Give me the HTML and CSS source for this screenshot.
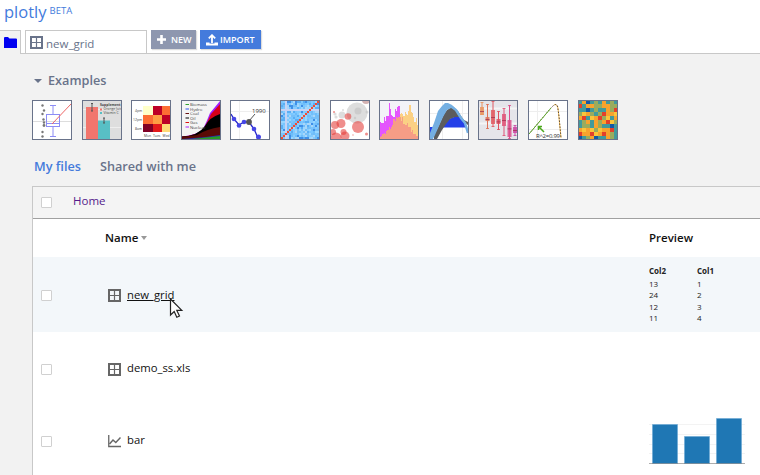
FILE: index.html
```html
<!DOCTYPE html>
<html lang="en">
<head>
<meta charset="utf-8">
<title>plotly</title>
<link rel="stylesheet" href="styles.css">
</head>
<body>
<svg class="defs" width="0" height="0">
  <symbol id="grid" viewBox="0 0 13 13"><rect x="1" y="1" width="11" height="11" fill="none" stroke="currentColor" stroke-width="2"/><path d="M6.5 1V12M1 6.5H12" stroke="currentColor" stroke-width="1.2"/></symbol>
</svg>
<header class="brand"><span class="logo">plotly</span><span class="beta">BETA</span></header>
<nav class="tabs">
  <div class="tab folder"><svg width="13" height="11" viewBox="0 0 13 11"><path d="M0 1Q0 0 1 0H4L5.500 1.500H12Q13 1.500 13 2.500V11H0Z" fill="#0000f0"/></svg></div>
  <div class="tab file"><svg width="13" height="13"><use href="#grid"/></svg><span>new_grid</span></div>
  <button class="btn new"><svg width="9" height="9" viewBox="0 0 9 9"><path d="M4.500 0V9M0 4.500H9" stroke="#fff" stroke-width="2.600"/></svg><span>NEW</span></button>
  <button class="btn import"><svg width="12" height="12" viewBox="0 0 12 12"><path d="M6 9V2M2.800 4.300L6 1.200L9.200 4.300" fill="none" stroke="#fff" stroke-width="1.800"/><path d="M0 8.500H3.500V9.500H8.500V8.500H12V11.500H0Z" fill="#fff"/></svg><span>IMPORT</span></button>
</nav>
<main>
  <h2 class="examples"><i class="caret"></i>Examples</h2>
  <div class="thumbs">
    <svg viewBox="0 0 38 38"><path d="M0 20.500H38" stroke="#ddd"/><g fill="none" stroke="#8c8cf5"><rect x="13.500" y="13.500" width="13" height="12"/><path d="M13.500 22.500H26.500M20 13.500V4.500M17 4.500H23M20 25.500V35.500M17 35.500H23"/></g><path d="M19 23L38 3" stroke="#e66" stroke-width="1"/><g fill="#777"><circle cx="9.500" cy="4.500" r="1.200"/><circle cx="11" cy="9.500" r="1.200"/><circle cx="9.500" cy="13" r="1.200"/><circle cx="10.500" cy="18.500" r="1.200"/><circle cx="11" cy="21.500" r="1.200"/><circle cx="11" cy="24.500" r="1.400"/><circle cx="9.500" cy="31" r="1.200"/><circle cx="9.500" cy="35.500" r="1.200"/></g></svg>
    <svg viewBox="0 0 38 38"><path d="M0 0H38V38H0Z" fill="#dedede"/><path d="M0 8.500H38M0 26.500H38" stroke="#eee"/><rect x="3" y="6" width="12" height="32" fill="#f1756d"/><rect x="15" y="19.500" width="12" height="18.500" fill="#58bfc5"/><path d="M9 2.500V10M8 2.500H10M8 10H10M21 17V22M20 17H22M20 22H22" stroke="#555"/><path d="M17 8.500H19" stroke="#f1756d" stroke-width="2"/><path d="M17 12H19" stroke="#58bfc5" stroke-width="2"/><g class="tiny"><text x="17" y="5.200" font-weight="700">Supplement</text><text x="20.500" y="9.400">Orange Juice</text><text x="20.500" y="13">Vitamin C</text></g></svg>
    <svg viewBox="0 0 38 38"><g shape-rendering="crispEdges"><path fill="#ffffc8" d="M11 5h10v9H11z"/><path fill="#bd0026" d="M21 5h9v9h-9zM30 14h8v9h-8z"/><path fill="#fc6d33" d="M30 5h8v9h-8zM11 14h10v9H11z"/><path fill="#fd9f44" d="M21 14h9v9h-9z"/><path fill="#800026" d="M11 23h10v8H11z"/><path fill="#e31a1c" d="M21 23h9v8h-9z"/><path fill="#fed976" d="M30 23h8v8h-8z"/></g><g class="tiny"><text x="3" y="11">4pm</text><text x="1" y="20">12pm</text><text x="3" y="29">8am</text><text x="12" y="35.500">Mon</text><text x="21" y="35.500">Tues</text><text x="30.500" y="35.500">Wed</text></g></svg>
    <svg viewBox="0 0 38 38"><path fill="#f4f4f4" d="M0 0h38v38H0z"/><path fill="#a020ff" d="M0 35.500Q15 34 21 28Q25 20 28 12L38 0V38H0Z"/><path fill="#d80018" d="M0 35.500Q15 35 22 27Q26 20 29 13L38 3V38H0Z"/><path fill="#000" d="M0 35.500Q16 35 23 25Q28 16 38 13V38H0Z"/><path fill="#5a0a06" d="M0 36L15 34Q25 28 38 26V38H0Z"/><path fill="#2a2ab0" d="M0 38L24 36L38 34V38Z"/><path fill="#259a25" d="M10 38L38 35V38Z"/><path stroke="#31a331" d="M3.500 3.500H7"/><path stroke="#35e" d="M3.500 8H7"/><path stroke="#611" d="M3.500 12.500H7"/><path stroke="#000" d="M3.500 17H7"/><path stroke="#d11" d="M3.500 21.500H7"/><path stroke="#a2f" d="M3.500 26H7"/><g class="tiny legend"><text x="8" y="5">Biomass</text><text x="8" y="9.500">Hydro</text><text x="8" y="14">Coal</text><text x="8" y="18.500">Oil</text><text x="8" y="23">Gas</text><text x="8" y="27.500">Nuclear</text></g></svg>
    <svg viewBox="0 0 38 38"><path d="M0 10.500H38M8.500 0V38" stroke="#eee"/><path d="M0 13L3 18L8 24L13 21L18 21L23 28L27 37" fill="none" stroke="#2525c8" stroke-width="1.300"/><path d="M18 20L24 13" stroke="#555"/><g fill="#4646e6"><circle cx="3" cy="18" r="2.300"/><circle cx="8" cy="24.500" r="2.300"/><circle cx="13" cy="21" r="2.300"/><circle cx="23" cy="28" r="2.300"/><circle cx="27.500" cy="36" r="2.500"/></g><circle cx="18" cy="21" r="2.900" fill="#555"/><text class="year" x="21" y="11.500">1990</text></svg>
    <svg viewBox="0 0 38 38" id="matrix" shape-rendering="crispEdges"></svg>
    <svg viewBox="0 0 38 38"><g fill="#bbb" fill-opacity=".5"><circle cx="26" cy="12" r="10.500"/><circle cx="27" cy="10" r="3.500"/><circle cx="11" cy="14" r="3.500"/><circle cx="12" cy="9" r="1"/><circle cx="4" cy="13" r="1.600"/><circle cx="5" cy="16" r="1.600"/><circle cx="24" cy="17" r="1.200"/><circle cx="36" cy="11" r="1.500"/><circle cx="35" cy="-1" r="4" fill="#a66"/></g><g fill="#e33c38" fill-opacity=".58"><circle cx="27" cy="26" r="6"/><circle cx="17" cy="15.500" r="3.300"/><circle cx="10" cy="22.500" r="4.500"/><circle cx="4" cy="24" r="4"/><circle cx="12.500" cy="31" r="3"/><circle cx="2" cy="31" r="3"/><circle cx="5" cy="37" r="5.500"/><circle cx="14" cy="35" r="4.500"/><circle cx="35.500" cy="33" r="1.500"/><circle cx="3" cy="11" r="1"/><circle cx="22" cy="34" r=".7"/></g></svg>
    <svg viewBox="0 0 38 38" id="histogram" shape-rendering="crispEdges"><path fill="#f3f3f8" d="M0 0h38v38H0z"/></svg>
    <svg viewBox="0 0 38 38"><path d="M0 12.500H38M12.500 0V38M32.500 0V38" stroke="#eee"/><path d="M0 26H10L15 23L19 18L24 16H30L33 20L36 25V26.500H3V33H0Z" fill="#2440e8"/><path d="M4 38V34L9 24L14 13L17 9L20 7H24L28 10L31 15L34 19L38 21V24L34 21L30 16H25L20 18L16 23L12 29L7 38Z" fill="#5c5c5c"/><path d="M0 38V32L4 22L8 10L12 5L15 2H18L22 4L26 8L21 7L17 9L13 16L9 25L5 34L3 38Z" fill="#74afe2"/><path d="M22 6L26 9L31 17L35 22L38 32" fill="none" stroke="#74afe2" stroke-width="2.500"/></svg>
    <svg viewBox="0 0 38 38" id="boxes"><path fill="#e5e5ea" d="M0 0h38v38H0z"/><path d="M0 7.500H38M0 22.500H38" stroke="#f5f5f5" stroke-width="2"/></svg>
    <svg viewBox="0 0 38 38"><path d="M0 10.500H38M0 28.500H38M8.500 0V38" stroke="#eee"/><path d="M25 4Q27 2 29 7L32 37" fill="none" stroke="#f5c05c"/><path d="M0 33L21 8Q27 1 28.500 5L30 15L32 37" fill="none" stroke="#604b35" stroke-dasharray="1.500 1.500"/><path d="M0 33L22 7" stroke="#62ad32" stroke-width="1"/><path d="M15 31L10 26M9.500 29V25.500H13" fill="none" stroke="#4ca81c" stroke-width="1.500"/><text class="year" x="7" y="37" textLength="24">R^2=0.99</text></svg>
    <svg viewBox="0 0 38 38" id="mosaic" shape-rendering="crispEdges"></svg>
  </div>
  <div class="switch"><a class="active">My files</a><a>Shared with me</a></div>
  <section class="panel">
    <div class="crumbs"><i class="check"></i><a>Home</a></div>
    <div class="row head"><span class="name">Name<i class="sort"></i></span><span class="preview">Preview</span></div>
    <div class="row item hover"><i class="check"></i><svg class="icon" width="13" height="13"><use href="#grid"/></svg><span class="title">new_grid<svg class="pointer" width="15" height="21" viewBox="0 0 15 21"><path d="M1.500 1V17L5.200 13.500L7.800 19.300L10.500 18L7.800 12.400H12.800Z" fill="#fff" stroke="#222" stroke-width="1.200"/></svg></span>
      <div class="preview data"><b>Col2</b><b>Col1</b><span>13</span><span>1</span><span>24</span><span>2</span><span>12</span><span>3</span><span>11</span><span>4</span></div></div>
    <div class="row item"><i class="check"></i><svg class="icon" width="13" height="13"><use href="#grid"/></svg><span class="title">demo_ss.xls</span></div>
    <div class="row item last"><i class="check"></i><svg class="icon" width="13" height="13" viewBox="0 0 13 13"><path d="M.75 0V11.500H13" fill="none" stroke="currentColor" stroke-width="1.300"/><path d="M1.500 9L5 5L7.800 7.500L12.500 2.500" fill="none" stroke="currentColor" stroke-width="1.500"/></svg><span class="title">bar</span>
      <svg class="preview chart" width="96" height="48" viewBox="0 0 96 48"><path d="M0 8.500H96M0 18.500H96M0 28.500H96M0 37.500H96" stroke="#f3f3f3"/><g fill="#1f77b4" stroke="#6eaad4" stroke-width=".7"><path d="M3.500 8.500h25v39h-25zM35.500 20.500h25v27h-25zM67.500 2.500h25v45h-25z"/></g><path d="M0 47.500H96" stroke="#777" stroke-opacity=".6"/></svg></div>
  </section>
</main>
<script src="thumbs.js"></script>
</body>
</html>
```
FILE: styles.css
```css
* { box-sizing: border-box; }
body { margin: 0; width: 760px; height: 475px; overflow: hidden; background: #fff; color: #111; font-family: "Open Sans", "Noto Sans", sans-serif; }
.defs { position: absolute; }
.brand { height: 30px; padding-left: 4px; display: flex; align-items: flex-start; color: #447bdc; }
.logo { font-size: 16.5px; line-height: 24px; }
.beta { font-size: 9.5px; line-height: 21px; margin-left: 3px; }
.tabs { height: 24px; display: flex; align-items: flex-start; border-bottom: 1px solid #c8c8c8; }
.tab { height: 24px; border: 1px solid #c8c8c8; border-bottom: 0; display: flex; }
.folder { width: 21px; padding: 6px 0 0 4px; border-left: 0; background: #f2f2f2; }
.file { width: 122px; height: 23px; margin-left: 4px; padding: 5px 0 0 4px; color: #69738a; font-size: 11.5px; line-height: 16px; }
.file span { margin-left: 3px; }
.btn { height: 19px; border: 0; padding: 0 0 0 6px; display: flex; align-items: center; color: #fff; font: 600 9px/19px "Open Sans", sans-serif; box-shadow: 1px 1px 1px #ddd; }
.new { width: 45px; margin-left: 4px; background: #8e97af; }
.new span { margin-left: 5px; }
.import { width: 61px; margin-left: 4px; background: #447bdc; }
.import span { margin-left: 2px; }
main { height: 421px; padding-left: 32px; background: #f2f2f2; }
.examples { margin: 0; height: 46px; padding: 16px 0 0 2px; display: flex; align-items: flex-start; color: #69738a; font-size: 12.700px; font-weight: 600; line-height: 20px; }
.caret { margin: 9px 6px 0 0; border: 4px solid transparent; border-top: 4px solid #69738a; border-bottom: 0; }
.thumbs { display: flex; gap: 9.6px; }
.thumbs svg { width: 40px; height: 40px; flex: none; border: 1px solid #69738a; background: #fff; overflow: hidden; }
.tiny { font-size: 3.4px; fill: #444; }
.legend { font-size: 4.300px; }
.year { font-size: 6px; fill: #333; }
.switch { display: flex; gap: 19px; height: 46px; padding: 16px 0 0 2px; font-size: 12.700px; font-weight: 600; line-height: 20px; color: #69738a; }
.active { color: #447bdc; }
.panel { border: 1px solid #c8c8c8; border-width: 1px 0 0 1px; background: #fff; }
.crumbs { height: 32px; display: flex; align-items: center; padding-left: 8px; background: #f4f4f4; border-bottom: 1px solid #a0a0a0; font-size: 11.500px; line-height: 18px; color: #551a8b; }
.crumbs a { margin: -3px 0 0 21px; }
.check { width: 11px; height: 11px; flex: none; border: 1px solid #d0d0d0; border-radius: 1px; background: #fff; }
.row { display: flex; align-items: center; }
.head { height: 38px; padding: 0 0 2px 72px; font-size: 11.5px; font-weight: 600; }
.name { width: 544px; display: flex; align-items: center; }
.sort { margin: 1px 0 0 3px; border: 3px solid transparent; border-top: 4px solid #999; border-bottom: 0; }
.item { height: 73px; padding-left: 8px; font-size: 11.5px; }
.item:not(.hover) .check, .item:not(.hover) .icon { margin-top: 1px; }
.hover { height: 75px; padding-top: 1px; background: #f3f7fa; }
.last { height: 71px; }
.icon { margin-left: 56px; color: #666; flex: none; }
.title { position: relative; width: 62px; margin: -1px 0 0 6px; line-height: 16px; font-size: 11.300px; }
.hover .title { width: 48px; text-decoration: underline; }
.pointer { position: absolute; left: 42px; top: 11px; }
.item .data { margin-left: 474px; margin-top: -2px; display: grid; grid-template-columns: 48px 48px; grid-template-rows: 13px 11px 12px 11px 11px; font-size: 8px; line-height: 12px; color: #222; }
.item .chart { margin-left: 460px; margin-top: -1px; }
```
FILE: thumbs.js
```js
const NS = 'http://www.w3.org/2000/svg';
function rect(id, x, y, w, h, fill, opacity = 1) {
  const r = document.createElementNS(NS, 'rect');
  Object.entries({ x, y, width: w, height: h, fill, 'fill-opacity': opacity }).forEach(([k, v]) => r.setAttribute(k, v));
  document.getElementById(id).append(r);
}
let seed = 17;
const random = () => (seed = (seed * 16807) % 2147483647) / 2147483647;

const blues = ['#79c6ff', '#6fbdf8', '#86ccff', '#98d6ff', '#5aaef4', '#75bff8', '#a9d6f8', '#3f8fe8', '#82cbff'];
for (let r = 0; r < 19; r++) for (let c = 0; c < 19; c++) {
  const diagonal = c === 18 - r;
  rect('matrix', c * 2, r * 2, 2, 2, diagonal ? '#f04b35' : c === 2 || r === 4 ? '#c5d3f5' : blues[Math.floor(random() * blues.length)]);
}

const pink = [17, 16, 16, 22, 18, 23, 23, 36, 30, 24, 23, 22, 30, 28, 32, 33, 22, 18, 22, 15, 14, 14, 16, 12, 12, 7, 9, 5, 5, 3, 3];
const gold = [2, 3, 5, 6, 5, 8, 9, 12, 10, 12, 14, 20, 18, 22, 21, 22, 25, 26, 25, 23, 27, 25, 24, 28, 34, 27, 26, 22, 17, 21, 14];
const step = 38 / pink.length;
pink.forEach((v, i) => rect('histogram', i * step, 38 - v, step, v, '#df20ff', .75));
gold.forEach((v, i) => rect('histogram', i * step, 38 - v, step, v, '#ffc04d', .68));

[[3, 1, 14, 6, 14, '#e9945e'], [8.5, 3, 28, 16, 20, '#df7258'], [14, 0, 26, 9, 23, '#e05a62'], [19.500, 10, 29, 18, 23, '#df5060'],
 [25, 7, 35, 13, 25, '#df5578'], [30.500, 4, 38, 19, 36, '#dc4f8c'], [36, 24, 35, 26, 32, '#cc48a4']].forEach(([x, lo, hi, top, bottom, color]) => {
  rect('boxes', x - .5, lo, 1, hi - lo, color);
  rect('boxes', x - 1.5, lo, 3, .8, color);
  rect('boxes', x - 1.5, hi - .8, 3, .8, color);
  rect('boxes', x - 2, top, 4, bottom - top, color, .85);
  rect('boxes', x - 2, (top + bottom) / 2, 4, .8, '#a33450');
});

const tiles = ['tobtgtotgt', 'rtooggoogg', 'ttbtgttogr', 'gyogtgrooy', 'ortyorgyto', 'tgotogoryg', 'tggtogttbt', 'oyoygyoort', 'rooryorogt', 'btgobttogt'];
const colors = { t: '#429a9b', o: '#f7a32e', b: '#1558a5', g: '#9aab5d', r: '#e3402b', y: '#fac53b' };
tiles.forEach((line, r) => [...line].forEach((k, c) => rect('mosaic', c * 4 - 1, r * 4 - 1, 4, 4, colors[k])));
```
